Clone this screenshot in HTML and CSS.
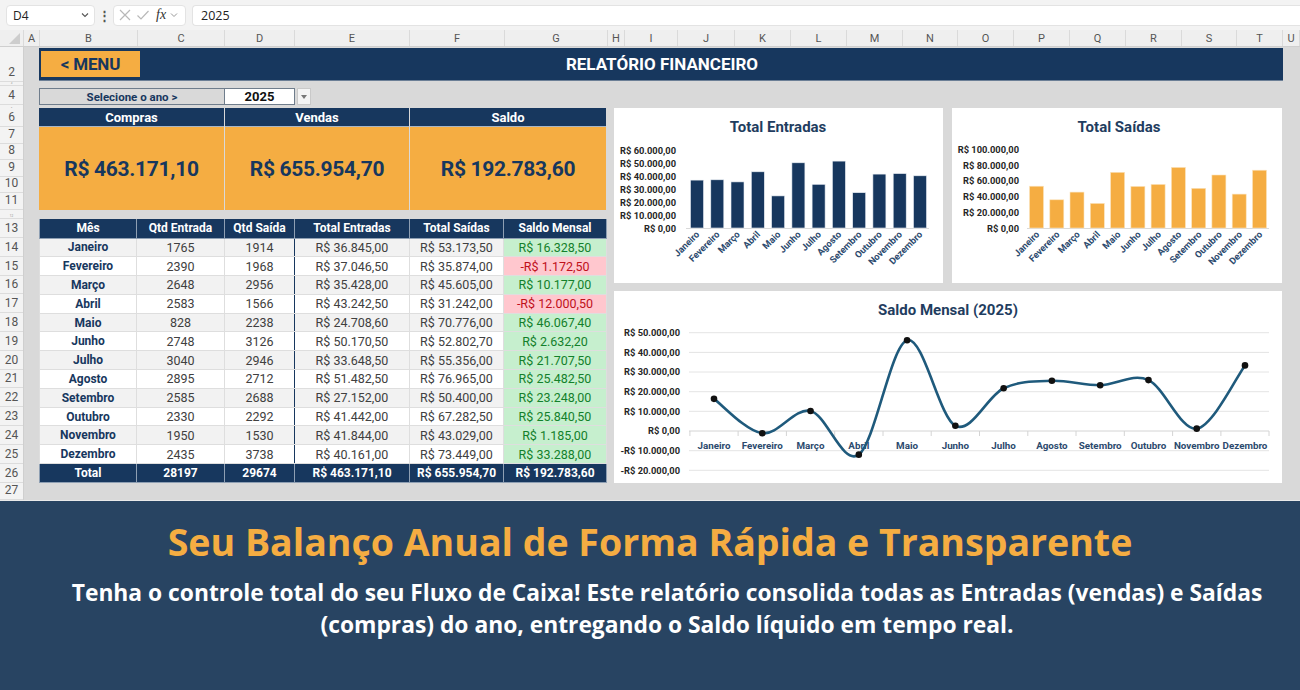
FILE: index.html
```html
<!DOCTYPE html>
<html lang="pt-BR">
<head>
<meta charset="utf-8">
<title>Relatório Financeiro</title>
<link rel="stylesheet" href="styles.css">
</head>
<body>
<div class="fbar">
  <div class="namebox"><span>D4</span><svg width="10" height="10" viewBox="0 0 10 10"><polyline points="2,3.5 5,6.5 8,3.5" fill="none" stroke="#555" stroke-width="1.1"/></svg></div>
  <div class="dots">⋮</div>
  <div class="fxbox">
    <svg width="14" height="14" viewBox="0 0 14 14"><path d="M2 2 L12 12 M12 2 L2 12" stroke="#b8b8b8" stroke-width="1.2"/></svg>
    <svg width="14" height="14" viewBox="0 0 14 14"><polyline points="1.5,7.5 5,11 12.5,3" fill="none" stroke="#b8b8b8" stroke-width="1.2"/></svg>
    <span class="fx">fx</span>
    <svg width="8" height="10" viewBox="0 0 8 10"><polyline points="1,3.5 4,6.5 7,3.5" fill="none" stroke="#999" stroke-width="1"/></svg>
  </div>
  <div class="formula">2025</div>
</div>

<div class="colheads">
  <div class="ch corner" style="width:24px"><span class="tri"></span></div>
  <div class="ch" style="width:16px">A</div>
  <div class="ch" style="width:98px">B</div>
  <div class="ch" style="width:87px">C</div>
  <div class="ch" style="width:70px">D</div>
  <div class="ch" style="width:115px">E</div>
  <div class="ch" style="width:95px">F</div>
  <div class="ch" style="width:103px">G</div>
  <div class="ch" style="width:17px">H</div>
  <div class="ch" style="width:53px">I</div>
  <div class="ch" style="width:57px">J</div>
  <div class="ch" style="width:56px">K</div>
  <div class="ch" style="width:56px">L</div>
  <div class="ch" style="width:56px">M</div>
  <div class="ch" style="width:55px">N</div>
  <div class="ch" style="width:56px">O</div>
  <div class="ch" style="width:56px">P</div>
  <div class="ch" style="width:56px">Q</div>
  <div class="ch" style="width:56px">R</div>
  <div class="ch" style="width:55px">S</div>
  <div class="ch" style="width:46px">T</div>
  <div class="ch" style="width:17px">U</div>
</div>

<div class="sheet">
  <div class="rowheads">
    <div class="rh" style="height:35px">2</div>
    <div class="rh tiny" style="height:4px">3</div>
    <div class="rh" style="height:19px">4</div>
    <div class="rh tiny tiny2" style="height:3px">5</div>
    <div class="rh" style="height:19px">6</div>
    <div class="rh" style="height:16.6px">7</div>
    <div class="rh" style="height:16.6px">8</div>
    <div class="rh" style="height:16.6px">9</div>
    <div class="rh" style="height:16.6px">10</div>
    <div class="rh" style="height:16.6px">11</div>
    <div class="rh tiny" style="height:9px">12</div>
    <div class="rh" style="height:19px">13</div>
    <div class="rh" style="height:18.8px">14</div>
    <div class="rh" style="height:18.8px">15</div>
    <div class="rh" style="height:18.8px">16</div>
    <div class="rh" style="height:18.8px">17</div>
    <div class="rh" style="height:18.8px">18</div>
    <div class="rh" style="height:18.8px">19</div>
    <div class="rh" style="height:18.8px">20</div>
    <div class="rh" style="height:18.8px">21</div>
    <div class="rh" style="height:18.8px">22</div>
    <div class="rh" style="height:18.8px">23</div>
    <div class="rh" style="height:18.8px">24</div>
    <div class="rh" style="height:18.8px">25</div>
    <div class="rh" style="height:19.4px">26</div>
    <div class="rh" style="height:17px">27</div>
  </div>

  <div class="canvas">
    <div class="titlebar">
      <div class="menu">&lt; MENU</div>
      <div class="title">RELATÓRIO FINANCEIRO</div>
      <div></div>
    </div>

    <div class="selector">
      <div class="sel-label">Selecione o ano &gt;</div>
      <div class="sel-value">2025</div>
      <div class="sel-btn"><svg width="6" height="4" viewBox="0 0 6 4"><polygon points="0,0 6,0 3,4" fill="#777"/></svg></div>
    </div>

    <div class="main">
      <div class="left">
        <div class="kpis">
          <div class="kpi"><div class="kpi-h">Compras</div><div class="kpi-v">R$ 463.171,10</div></div>
          <div class="kpi"><div class="kpi-h">Vendas</div><div class="kpi-v">R$ 655.954,70</div></div>
          <div class="kpi"><div class="kpi-h">Saldo</div><div class="kpi-v">R$ 192.783,60</div></div>
        </div>

        <table class="tbl">
          <colgroup><col style="width:97px"><col style="width:88px"><col style="width:70px"><col style="width:115px"><col style="width:94px"><col style="width:103px"></colgroup>
          <thead>
            <tr><th>Mês</th><th>Qtd Entrada</th><th>Qtd Saída</th><th>Total Entradas</th><th>Total Saídas</th><th>Saldo Mensal</th></tr>
          </thead>
          <tbody>
            <tr class="alt"><td class="m">Janeiro</td><td>1765</td><td class="sep">1914</td><td>R$ 36.845,00</td><td>R$ 53.173,50</td><td class="pos">R$ 16.328,50</td></tr>
            <tr><td class="m">Fevereiro</td><td>2390</td><td class="sep">1968</td><td>R$ 37.046,50</td><td>R$ 35.874,00</td><td class="neg">-R$ 1.172,50</td></tr>
            <tr class="alt"><td class="m">Março</td><td>2648</td><td class="sep">2956</td><td>R$ 35.428,00</td><td>R$ 45.605,00</td><td class="pos">R$ 10.177,00</td></tr>
            <tr><td class="m">Abril</td><td>2583</td><td class="sep">1566</td><td>R$ 43.242,50</td><td>R$ 31.242,00</td><td class="neg">-R$ 12.000,50</td></tr>
            <tr class="alt"><td class="m">Maio</td><td>828</td><td class="sep">2238</td><td>R$ 24.708,60</td><td>R$ 70.776,00</td><td class="pos">R$ 46.067,40</td></tr>
            <tr><td class="m">Junho</td><td>2748</td><td class="sep">3126</td><td>R$ 50.170,50</td><td>R$ 52.802,70</td><td class="pos">R$ 2.632,20</td></tr>
            <tr class="alt"><td class="m">Julho</td><td>3040</td><td class="sep">2946</td><td>R$ 33.648,50</td><td>R$ 55.356,00</td><td class="pos">R$ 21.707,50</td></tr>
            <tr><td class="m">Agosto</td><td>2895</td><td class="sep">2712</td><td>R$ 51.482,50</td><td>R$ 76.965,00</td><td class="pos">R$ 25.482,50</td></tr>
            <tr class="alt"><td class="m">Setembro</td><td>2585</td><td class="sep">2688</td><td>R$ 27.152,00</td><td>R$ 50.400,00</td><td class="pos">R$ 23.248,00</td></tr>
            <tr><td class="m">Outubro</td><td>2330</td><td class="sep">2292</td><td>R$ 41.442,00</td><td>R$ 67.282,50</td><td class="pos">R$ 25.840,50</td></tr>
            <tr class="alt"><td class="m">Novembro</td><td>1950</td><td class="sep">1530</td><td>R$ 41.844,00</td><td>R$ 43.029,00</td><td class="pos">R$ 1.185,00</td></tr>
            <tr><td class="m">Dezembro</td><td>2435</td><td class="sep">3738</td><td>R$ 40.161,00</td><td>R$ 73.449,00</td><td class="pos">R$ 33.288,00</td></tr>
          </tbody>
          <tfoot>
            <tr><td>Total</td><td>28197</td><td>29674</td><td>R$ 463.171,10</td><td>R$ 655.954,70</td><td>R$ 192.783,60</td></tr>
          </tfoot>
        </table>
      </div>

      <div class="right">
        <div class="card">
          <svg class="chart" width="329" height="175" viewBox="0 0 329 175">
            <text class="ctitle" x="164" y="24" text-anchor="middle">Total Entradas</text>
            <g class="ylab" text-anchor="end">
              <text x="62" y="45.5">R$ 60.000,00</text>
              <text x="62" y="58.5">R$ 50.000,00</text>
              <text x="62" y="71.5">R$ 40.000,00</text>
              <text x="62" y="84.5">R$ 30.000,00</text>
              <text x="62" y="97.5">R$ 20.000,00</text>
              <text x="62" y="110.5">R$ 10.000,00</text>
              <text x="62" y="123.5">R$ 0,00</text>
            </g>
            <line x1="72" y1="120.5" x2="315" y2="120.5" stroke="#d9d9d9" stroke-width="1"/>
            <g fill="#17375e" stroke="#e8edf3" stroke-width="0.6">
              <rect x="76.5" y="72.1" width="13" height="47.9"/>
              <rect x="96.8" y="71.8" width="13" height="48.2"/>
              <rect x="117" y="73.9" width="13" height="46.1"/>
              <rect x="137.3" y="63.8" width="13" height="56.2"/>
              <rect x="157.6" y="87.9" width="13" height="32.1"/>
              <rect x="177.9" y="54.8" width="13" height="65.2"/>
              <rect x="198.1" y="76.3" width="13" height="43.7"/>
              <rect x="218.4" y="53.1" width="13" height="66.9"/>
              <rect x="238.7" y="84.7" width="13" height="35.3"/>
              <rect x="258.9" y="66.1" width="13" height="53.9"/>
              <rect x="279.2" y="65.6" width="13" height="54.4"/>
              <rect x="299.5" y="67.8" width="13" height="52.2"/>
            </g>
            <g class="xlab" text-anchor="end">
              <text transform="translate(86,127) rotate(-45)">Janeiro</text>
              <text transform="translate(106.3,127) rotate(-45)">Fevereiro</text>
              <text transform="translate(126.5,127) rotate(-45)">Março</text>
              <text transform="translate(146.8,127) rotate(-45)">Abril</text>
              <text transform="translate(167.1,127) rotate(-45)">Maio</text>
              <text transform="translate(187.4,127) rotate(-45)">Junho</text>
              <text transform="translate(207.6,127) rotate(-45)">Julho</text>
              <text transform="translate(227.9,127) rotate(-45)">Agosto</text>
              <text transform="translate(248.2,127) rotate(-45)">Setembro</text>
              <text transform="translate(268.4,127) rotate(-45)">Outubro</text>
              <text transform="translate(288.7,127) rotate(-45)">Novembro</text>
              <text transform="translate(309,127) rotate(-45)">Dezembro</text>
            </g>
          </svg>
        </div>

        <div class="card">
          <svg class="chart" width="330" height="175" viewBox="0 0 330 175">
            <text class="ctitle" x="167" y="24" text-anchor="middle">Total Saídas</text>
            <g class="ylab" text-anchor="end">
              <text x="67" y="44.8">R$ 100.000,00</text>
              <text x="67" y="60.5">R$ 80.000,00</text>
              <text x="67" y="76.3">R$ 60.000,00</text>
              <text x="67" y="92">R$ 40.000,00</text>
              <text x="67" y="107.8">R$ 20.000,00</text>
              <text x="67" y="123.5">R$ 0,00</text>
            </g>
            <line x1="75" y1="120.5" x2="317" y2="120.5" stroke="#d9d9d9" stroke-width="1"/>
            <g fill="#f5ad42" stroke="#fbe3bd" stroke-width="0.6">
              <rect x="77.5" y="78.2" width="14" height="41.8"/>
              <rect x="97.8" y="91.8" width="14" height="28.2"/>
              <rect x="118" y="84.1" width="14" height="35.9"/>
              <rect x="138.3" y="95.4" width="14" height="24.6"/>
              <rect x="158.6" y="64.3" width="14" height="55.7"/>
              <rect x="178.9" y="78.4" width="14" height="41.6"/>
              <rect x="199.1" y="76.4" width="14" height="43.6"/>
              <rect x="219.4" y="59.4" width="14" height="60.6"/>
              <rect x="239.7" y="80.3" width="14" height="39.7"/>
              <rect x="259.9" y="67" width="14" height="53"/>
              <rect x="280.2" y="86.1" width="14" height="33.9"/>
              <rect x="300.5" y="62.2" width="14" height="57.8"/>
            </g>
            <g class="xlab" text-anchor="end">
              <text transform="translate(88,127) rotate(-45)">Janeiro</text>
              <text transform="translate(108.3,127) rotate(-45)">Fevereiro</text>
              <text transform="translate(128.5,127) rotate(-45)">Março</text>
              <text transform="translate(148.8,127) rotate(-45)">Abril</text>
              <text transform="translate(169.1,127) rotate(-45)">Maio</text>
              <text transform="translate(189.4,127) rotate(-45)">Junho</text>
              <text transform="translate(209.6,127) rotate(-45)">Julho</text>
              <text transform="translate(229.9,127) rotate(-45)">Agosto</text>
              <text transform="translate(250.2,127) rotate(-45)">Setembro</text>
              <text transform="translate(270.4,127) rotate(-45)">Outubro</text>
              <text transform="translate(290.7,127) rotate(-45)">Novembro</text>
              <text transform="translate(311,127) rotate(-45)">Dezembro</text>
            </g>
          </svg>
        </div>

        <div class="card wide">
          <svg class="chart" width="668" height="192" viewBox="0 0 668 192">
            <text class="ctitle" x="334" y="24" text-anchor="middle">Saldo Mensal (2025)</text>
            <g stroke="#e4e4e4" stroke-width="1">
              <line x1="75" y1="41.7" x2="655" y2="41.7"/>
              <line x1="75" y1="61.4" x2="655" y2="61.4"/>
              <line x1="75" y1="81" x2="655" y2="81"/>
              <line x1="75" y1="100.7" x2="655" y2="100.7"/>
              <line x1="75" y1="120.3" x2="655" y2="120.3"/>
              <line x1="75" y1="159.7" x2="655" y2="159.7"/>
              <line x1="75" y1="179.3" x2="655" y2="179.3"/>
            </g>
            <g stroke="#d4d4d4" stroke-width="1">
              <line x1="75" y1="140" x2="655" y2="140"/>
              <line x1="75.9" y1="140" x2="75.9" y2="145"/>
              <line x1="124.1" y1="140" x2="124.1" y2="145"/>
              <line x1="172.4" y1="140" x2="172.4" y2="145"/>
              <line x1="220.7" y1="140" x2="220.7" y2="145"/>
              <line x1="269" y1="140" x2="269" y2="145"/>
              <line x1="317.2" y1="140" x2="317.2" y2="145"/>
              <line x1="365.5" y1="140" x2="365.5" y2="145"/>
              <line x1="413.8" y1="140" x2="413.8" y2="145"/>
              <line x1="462" y1="140" x2="462" y2="145"/>
              <line x1="510.3" y1="140" x2="510.3" y2="145"/>
              <line x1="558.6" y1="140" x2="558.6" y2="145"/>
              <line x1="606.9" y1="140" x2="606.9" y2="145"/>
              <line x1="655" y1="140" x2="655" y2="145"/>
            </g>
            <g class="ylab" text-anchor="end">
              <text x="66" y="45">R$ 50.000,00</text>
              <text x="66" y="64.7">R$ 40.000,00</text>
              <text x="66" y="84.3">R$ 30.000,00</text>
              <text x="66" y="104">R$ 20.000,00</text>
              <text x="66" y="123.6">R$ 10.000,00</text>
              <text x="66" y="143.3">R$ 0,00</text>
              <text x="66" y="163">-R$ 10.000,00</text>
              <text x="66" y="182.6">-R$ 20.000,00</text>
            </g>
            <g class="clab" text-anchor="middle">
              <text x="100" y="157.5">Janeiro</text>
              <text x="148.3" y="157.5">Fevereiro</text>
              <text x="196.5" y="157.5">Março</text>
              <text x="244.8" y="157.5">Abril</text>
              <text x="293.1" y="157.5">Maio</text>
              <text x="341.4" y="157.5">Junho</text>
              <text x="389.6" y="157.5">Julho</text>
              <text x="437.9" y="157.5">Agosto</text>
              <text x="486.2" y="157.5">Setembro</text>
              <text x="534.5" y="157.5">Outubro</text>
              <text x="582.7" y="157.5">Novembro</text>
              <text x="631" y="157.5">Dezembro</text>
            </g>
            <path fill="none" stroke="#1f5a7c" stroke-width="2.6" stroke-linecap="round"
              d="M100,107.83 C108.05,113.58 132.18,140.29 148.27,142.31 C164.36,144.33 180.46,116.39 196.55,119.95 C212.64,123.51 228.73,175.42 244.82,163.64 C260.91,151.86 277,54.06 293.09,49.25 C309.18,44.44 325.27,126.81 341.36,134.81 C357.45,142.81 373.55,104.74 389.64,97.24 C405.73,89.74 421.82,90.31 437.91,89.8 C454,89.29 470.09,94.32 486.18,94.2 C502.27,94.08 518.36,81.84 534.45,89.09 C550.54,96.34 566.64,140.12 582.73,137.67 C598.82,135.22 622.95,84.96 631,74.42"/>
            <g fill="#111">
              <circle cx="100" cy="107.83" r="3.3"/>
              <circle cx="148.27" cy="142.31" r="3.3"/>
              <circle cx="196.55" cy="119.95" r="3.3"/>
              <circle cx="244.82" cy="163.64" r="3.3"/>
              <circle cx="293.09" cy="49.25" r="3.3"/>
              <circle cx="341.36" cy="134.81" r="3.3"/>
              <circle cx="389.64" cy="97.24" r="3.3"/>
              <circle cx="437.91" cy="89.8" r="3.3"/>
              <circle cx="486.18" cy="94.2" r="3.3"/>
              <circle cx="534.45" cy="89.09" r="3.3"/>
              <circle cx="582.73" cy="137.67" r="3.3"/>
              <circle cx="631" cy="74.42" r="3.3"/>
            </g>
          </svg>
        </div>
      </div>
    </div>
  </div>
</div>

<div class="banner">
  <h1 class="b-title">Seu Balanço Anual de Forma Rápida e Transparente</h1>
  <p class="b-text">Tenha o controle total do seu Fluxo de Caixa! Este relatório consolida todas as Entradas (vendas) e Saídas (compras) do ano, entregando o Saldo líquido em tempo real.</p>
</div>
</body>
</html>
```

FILE: styles.css
```css
* { box-sizing: border-box; }

html, body {
  margin: 0;
  padding: 0;
}

body {
  width: 1300px;
  height: 690px;
  overflow: hidden;
  background: #d9d9d9;
  font-family: "Roboto", "Liberation Sans", sans-serif;
  color: #222;
}

/* formula bar */
.fbar {
  height: 30px;
  background: #f3f3f3;
  display: flex;
  align-items: center;
  padding-left: 6px;
  font-family: "Open Sans", "Liberation Sans", sans-serif;
  font-size: 12px;
  color: #222;
}
.namebox {
  width: 89px;
  height: 21px;
  background: #fff;
  border: 1px solid #e3e3e3;
  border-radius: 4px;
  display: flex;
  align-items: center;
  justify-content: space-between;
  padding: 0 4px 0 6px;
}
.dots {
  width: 18px;
  text-align: center;
  color: #555;
  font-size: 13px;
  font-weight: 700;
}
.fxbox {
  width: 73px;
  height: 21px;
  background: #fff;
  border: 1px solid #e3e3e3;
  border-radius: 4px;
  display: flex;
  align-items: center;
  gap: 4px;
  padding-left: 4px;
}
.fx {
  font-family: "Liberation Serif", "DejaVu Serif", serif;
  font-style: italic;
  font-size: 14px;
  color: #333;
  margin-left: 2px;
}
.formula {
  flex: 1;
  height: 21px;
  margin-left: 6px;
  background: #fff;
  border: 1px solid #e3e3e3;
  border-right: 0;
  border-radius: 4px 0 0 4px;
  padding-left: 8px;
  display: flex;
  align-items: center;
  font-size: 12.5px;
}

/* column headers */
.colheads {
  height: 17px;
  display: flex;
  background: #efefef;
  border-bottom: 1px solid #cfcfcf;
}
.ch {
  flex: none;
  height: 100%;
  border-right: 1px solid #dadada;
  font-size: 11px;
  color: #555;
  display: flex;
  align-items: center;
  justify-content: center;
  overflow: hidden;
}
.corner { position: relative; background: #efefef; }
.tri {
  position: absolute;
  right: 3px;
  bottom: 2px;
  width: 0;
  height: 0;
  border-left: 11px solid transparent;
  border-bottom: 11px solid #cdcdcd;
}

/* sheet */
.sheet {
  height: 453px;
  display: flex;
}
.rowheads {
  width: 24px;
  flex: none;
  background: #f3f3f3;
  border-right: 1px solid #cfcfcf;
  display: flex;
  flex-direction: column;
}
.rh {
  flex: none;
  overflow: hidden;
  border-bottom: 1px solid #dcdcdc;
  display: flex;
  align-items: flex-end;
  justify-content: center;
  font-size: 12px;
  line-height: 16px;
  color: #555;
  padding-bottom: 1px;
}
.rh.tiny {
  font-size: 3px;
  line-height: 3px;
  padding-bottom: 0;
  color: #888;
}
.rh.tiny2 {
  font-size: 2px;
  line-height: 2px;
  border-bottom: 0;
}

.canvas {
  flex: 1;
  padding: 1px 17px 0 15px;
  background: #d9d9d9;
}

.titlebar {
  height: 33px;
  background: #17375e;
  display: grid;
  grid-template-columns: 1fr auto 1fr;
  align-items: center;
  padding-left: 2px;
  border-bottom: 1px solid #6c7f96;
}
.menu {
  justify-self: start;
  width: 99px;
  height: 26px;
  background: #f5ad42;
  color: #17375e;
  font-weight: 700;
  font-size: 17px;
  letter-spacing: -0.2px;
  display: flex;
  align-items: center;
  justify-content: center;
}
.title {
  color: #fff;
  font-weight: 700;
  font-size: 17px;
}

.selector {
  margin-top: 7px;
  height: 17px;
  display: flex;
  align-items: stretch;
}
.sel-label {
  width: 186px;
  background: #d9d9d9;
  border: 1px solid #6f7d8c;
  color: #17375e;
  font-weight: 700;
  font-size: 11.5px;
  display: flex;
  align-items: center;
  justify-content: center;
}
.sel-value {
  width: 70px;
  background: #fff;
  border: 1px solid #6f7d8c;
  border-left: 0;
  font-weight: 700;
  font-size: 13px;
  color: #111;
  display: flex;
  align-items: center;
  justify-content: center;
}
.sel-btn {
  width: 14px;
  margin-left: 2px;
  background: #f4f4f4;
  border: 1px solid #c9c9c9;
  display: flex;
  align-items: center;
  justify-content: center;
}

.main {
  margin-top: 3px;
  display: grid;
  grid-template-columns: 567px 668px;
  column-gap: 8px;
}

.left {
  display: flex;
  flex-direction: column;
}

.kpis {
  display: grid;
  grid-template-columns: 185px 184px 196px;
  column-gap: 1px;
  height: 102px;
}
.kpi {
  display: flex;
  flex-direction: column;
}
.kpi-h {
  height: 19px;
  background: #17375e;
  color: #fff;
  font-weight: 700;
  font-size: 13px;
  display: flex;
  align-items: center;
  justify-content: center;
  border-bottom: 1px solid #a8b6c6;
}
.kpi-v {
  flex: 1;
  background: #f5ad42;
  color: #17375e;
  font-weight: 700;
  font-size: 21px;
  letter-spacing: -0.3px;
  display: flex;
  align-items: center;
  justify-content: center;
}

.tbl {
  margin-top: 9px;
  width: 567px;
  table-layout: fixed;
  border-collapse: collapse;
  font-size: 12.5px;
}
.tbl th {
  height: 19px;
  padding: 0;
  background: #17375e;
  color: #fff;
  font-weight: 700;
  font-size: 12px;
  border: 1px solid #8e9fb3;
  border-top: 0;
}
.tbl td {
  height: 18.8px;
  padding: 0;
  text-align: center;
  color: #404040;
  border: 1px solid #dedede;
  background: #fff;
}
.tbl tr.alt td { background: #f2f2f2; }
.tbl td.m {
  color: #17375e;
  font-weight: 700;
  font-size: 12px;
}
.tbl td.sep { border-right: 1px solid #17375e; }
.tbl td.pos, .tbl tr.alt td.pos {
  background: #c6efce;
  color: #13802b;
}
.tbl td.neg, .tbl tr.alt td.neg {
  background: #ffc7ce;
  color: #c0101b;
}
.tbl tfoot td {
  height: 19.4px;
  background: #17375e;
  color: #fff;
  font-weight: 700;
  font-size: 12px;
  border: 1px solid #8e9fb3;
}

.right {
  display: grid;
  grid-template-columns: 329px 330px;
  grid-template-rows: 175px 192px;
  column-gap: 9px;
  row-gap: 8px;
}
.card {
  background: #fff;
}
.card.wide {
  grid-column: 1 / span 2;
}
.chart {
  display: block;
}
.ctitle {
  font-family: "Roboto", sans-serif;
  font-weight: 700;
  font-size: 15px;
  fill: #1f3d60;
}
.ylab text {
  font-family: "Roboto", sans-serif;
  font-weight: 700;
  font-size: 9.3px;
  fill: #262626;
}
.xlab text {
  font-family: "Roboto", sans-serif;
  font-weight: 700;
  font-size: 9.3px;
  fill: #2c4a6e;
}
.clab text {
  font-family: "Roboto", sans-serif;
  font-weight: 700;
  font-size: 9.8px;
  fill: #2c4a6e;
}

/* banner */
.banner {
  height: 190px;
  background: #284462;
  border-top: 1px solid #eaeaea;
  text-align: center;
  font-family: "Open Sans", "Liberation Sans", sans-serif;
  padding-top: 16px;
}
.b-title {
  margin: 0;
  color: #f5ad42;
  font-weight: 700;
  font-size: 37.5px;
  line-height: 50px;
}
.b-text {
  margin: 10px 0 0 60px;
  width: 1214px;
  color: #fff;
  font-weight: 700;
  font-size: 22.8px;
  line-height: 32px;
}
```
